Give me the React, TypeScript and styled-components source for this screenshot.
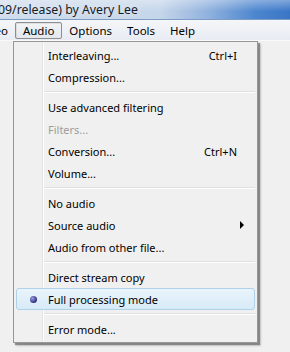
import React from 'react';
import styled, { createGlobalStyle } from 'styled-components';

const GlobalStyle = createGlobalStyle`
  html, body {
    margin: 0;
    padding: 0;
    background: #f0f0f0;
  }
  body {
    font-family: "Noto Sans", "Open Sans", sans-serif;
    font-size: 11px;
    color: #000;
  }
`;

type Entry =
  | { kind: 'item'; label: string; shortcut?: string; disabled?: boolean; submenu?: boolean; checked?: boolean }
  | { kind: 'sep' };

const entries: Entry[] = [
  { kind: 'item', label: 'Interleaving...', shortcut: 'Ctrl+I' },
  { kind: 'item', label: 'Compression...' },
  { kind: 'sep' },
  { kind: 'item', label: 'Use advanced filtering' },
  { kind: 'item', label: 'Filters...', disabled: true },
  { kind: 'item', label: 'Conversion...', shortcut: 'Ctrl+N' },
  { kind: 'item', label: 'Volume...' },
  { kind: 'sep' },
  { kind: 'item', label: 'No audio' },
  { kind: 'item', label: 'Source audio', submenu: true },
  { kind: 'item', label: 'Audio from other file...' },
  { kind: 'sep' },
  { kind: 'item', label: 'Direct stream copy' },
  { kind: 'item', label: 'Full processing mode', checked: true },
  { kind: 'sep' },
  { kind: 'item', label: 'Error mode...' },
];

const menuNames = ['Video', 'Audio', 'Options', 'Tools', 'Help'];

const Window = styled.div`
  position: relative;
  width: 290px;
  height: 352px;
  overflow: hidden;
  background: #f0f0f0;
`;

const TitleBar = styled.div`
  height: 19px;
  border-bottom: 1px solid #7d9cc4;
  background:
    linear-gradient(to bottom, rgba(255, 255, 255, 0.35), rgba(255, 255, 255, 0) 60%),
    linear-gradient(to right, #cfdcec 0%, #c6d6ea 55%, #8fb1de 72%, #4d86cf 88%, #3a76c6 100%);
  display: flex;
  align-items: center;
  overflow: hidden;
  white-space: nowrap;
`;

const TitleText = styled.span`
  margin-left: -2px;
  font-size: 12.3px;
  color: #141c28;
  text-shadow: 0 0 6px rgba(255, 255, 255, 0.9);
`;

const MenuBar = styled.div`
  height: 20px;
  display: flex;
  align-items: center;
  margin-left: -30px;
  background: linear-gradient(to bottom, #f4f6f9, #e8ecf2);
  border-bottom: 1px solid #f8f9fb;
  font-size: 11.5px;
`;

const BarItem = styled.div<{ $open?: boolean }>`
  height: 15px;
  display: flex;
  align-items: center;
  padding: 0 6.5px;
  border: 1px solid ${(p) => (p.$open ? '#8b8e93' : 'transparent')};
  border-radius: 2px;
  background: ${(p) => (p.$open ? 'linear-gradient(to bottom, #f3f4f6, #e4e7ec)' : 'transparent')};
  box-shadow: ${(p) => (p.$open ? 'inset 1px 1px 0 rgba(0,0,0,0.08)' : 'none')};
`;

const Menu = styled.div`
  position: absolute;
  left: 13px;
  top: 41px;
  width: 243px;
  padding: 2px 0 2px;
  background: #f0f0f0;
  border: 1px solid #979797;
  box-shadow: 2px 2px 1px rgba(0, 0, 0, 0.35), 3px 3px 2px rgba(0, 0, 0, 0.15);
`;

const Gutter = styled.div`
  position: absolute;
  top: 0;
  bottom: 0;
  left: 28px;
  width: 1px;
  background: #e2e3e3;
  border-right: 1px solid #ffffff;
`;

const Row = styled.div<{ $hot?: boolean; $disabled?: boolean }>`
  position: relative;
  height: 22px;
  margin: 0 2px;
  display: flex;
  align-items: center;
  border: 1px solid ${(p) => (p.$hot ? '#aed2e8' : 'transparent')};
  border-radius: 3px;
  box-sizing: border-box;
  background: ${(p) => (p.$hot ? 'linear-gradient(to bottom, #eaf4fb, #d6eaf7)' : 'transparent')};
  color: ${(p) => (p.$disabled ? '#9d9d9d' : '#000')};
  z-index: 1;
`;

const Check = styled.div`
  width: 30px;
  display: flex;
  justify-content: center;
  align-items: center;
  flex: none;
  margin-left: 1px;
`;

const Bullet = styled.span`
  width: 7px;
  height: 7px;
  border-radius: 50%;
  background: radial-gradient(circle at 35% 35%, #9a9ce0, #2f2e86 70%);
`;

const Label = styled.span`
  flex: 1;
  white-space: nowrap;
`;

const Shortcut = styled.span`
  width: 52px;
  margin-right: 17px;
  text-align: right;
  white-space: nowrap;
`;

const Arrow = styled.span`
  width: 0;
  height: 0;
  border-top: 4px solid transparent;
  border-bottom: 4px solid transparent;
  border-left: 4px solid #000;
  margin-right: 10px;
`;

const Separator = styled.div`
  position: relative;
  height: 8px;
  margin-left: 30px;
  margin-right: 2px;
  display: flex;
  align-items: center;
  &::after {
    content: '';
    flex: 1;
    height: 1px;
    background: #e0e0e0;
    border-bottom: 1px solid #ffffff;
  }
`;

export default function App() {
  return (
    <Window>
      <GlobalStyle />
      <TitleBar>
        <TitleText>09/release) by Avery Lee</TitleText>
      </TitleBar>
      <MenuBar>
        {menuNames.map((name) => (
          <BarItem key={name} $open={name === 'Audio'}>
            {name}
          </BarItem>
        ))}
      </MenuBar>
      <Menu>
        <Gutter />
        {entries.map((e, i) =>
          e.kind === 'sep' ? (
            <Separator key={i} />
          ) : (
            <Row key={i} $hot={e.checked} $disabled={e.disabled}>
              <Check>{e.checked && <Bullet />}</Check>
              <Label>{e.label}</Label>
              {e.shortcut && <Shortcut>{e.shortcut}</Shortcut>}
              {e.submenu && <Arrow />}
            </Row>
          )
        )}
      </Menu>
    </Window>
  );
}
